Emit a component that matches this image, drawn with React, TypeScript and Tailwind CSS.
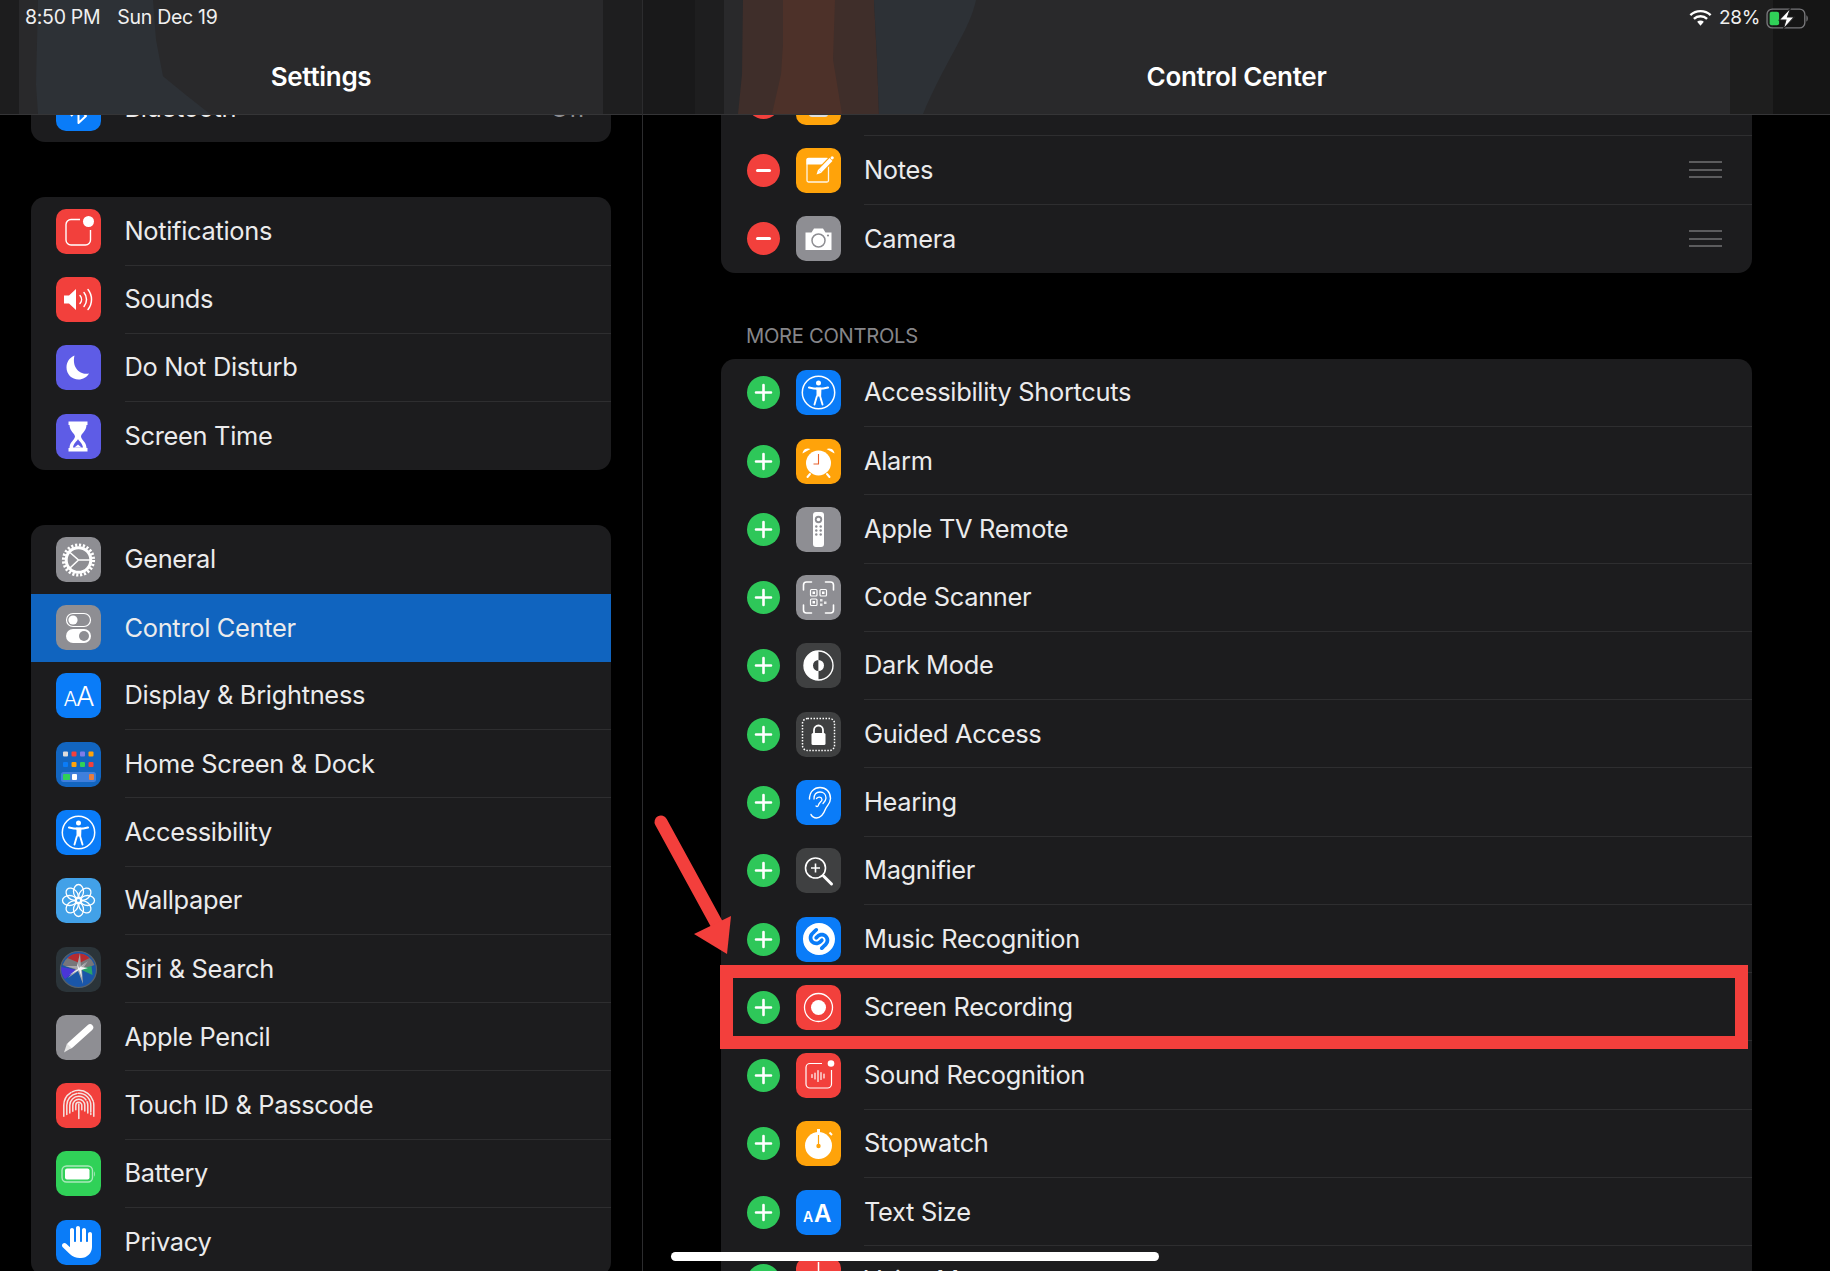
import React from "react";
import { SiShazam } from "react-icons/si";
import { FaHand } from "react-icons/fa6";

const V = ({ children }: { children: React.ReactNode }) => (
  <svg viewBox="0 0 45 45" className="size-full" fill="none">{children}</svg>
);

const Tile = ({ bg, children }: { bg: string; children: React.ReactNode }) => (
  <div className={`size-[45px] shrink-0 overflow-hidden rounded-[10px] ${bg}`}>{children}</div>
);

const W = "#ffffff";

const Bluetooth = () => (
  <Tile bg="bg-[#0a7cf8]"><V><path d="M15 15l15 15-7.5 7V8l7.500 7-15 15" stroke={W} strokeWidth="2" strokeLinejoin="round" /></V></Tile>
);
const Notifications = () => (
  <Tile bg="bg-[#f2403c]"><V>
    <path d="M24 10.500H15a5 5 0 0 0-5 5V31a5 5 0 0 0 5 5h14.500a5 5 0 0 0 5-5V21" stroke={W} strokeWidth="1.400" />
    <circle cx="32.500" cy="12.500" r="5.500" fill={W} />
  </V></Tile>
);
const Sounds = () => (
  <Tile bg="bg-[#f2403c]"><V>
    <path d="M8 18.500h5l7-6.500v21l-7-6.500H8z" fill={W} />
    <path d="M24 18.500a6 6 0 0 1 0 8M28 15.500a11 11 0 0 1 0 14M32 12.500a16 16 0 0 1 0 20" stroke={W} strokeWidth="1.500" strokeLinecap="round" />
  </V></Tile>
);
const Moon = () => (
  <Tile bg="bg-[#5e5ce6]"><V>
    <path d="M18.500 10.500C13 13 10.500 17.500 10.500 22.500c0 7 5.500 12 12 12 4.500 0 8.500-2.500 10.500-6-8.500 2-17.500-5.500-14.500-18z" fill={W} />
  </V></Tile>
);
const Hourglass = () => (
  <Tile bg="bg-[#5e5ce6]"><V>
    <path d="M12.500 7.500h19v3.500h-1c0 6-5.500 8.500-5.500 11.500s5.500 5.500 5.500 11.500h1V37.500h-19V34h1c0-6 5.500-8.500 5.500-11.500S13.500 17 13.500 11h-1z" fill={W} />
    <path d="M22 25c1 2.500 4.500 4 5 8.500H17c.5-4.500 4-6 5-8.500z" fill="#5e5ce6" />
    <path d="M18.500 33.500h7l-3.500-3z" fill={W} />
  </V></Tile>
);
const Gear = () => (
  <Tile bg="bg-[#8e8e93]"><V>
    <circle cx="22.500" cy="23" r="15" stroke={W} strokeWidth="3.200" strokeDasharray="2.200 1.727" />
    <circle cx="22.500" cy="23" r="12.300" stroke={W} strokeWidth="3" />
    <path d="M22.500 23L14 15.500M22.500 23H34M22.500 23L14 31" stroke={W} strokeWidth="1.600" />
  </V></Tile>
);
const Toggles = () => (
  <Tile bg="bg-[#8e8e93]"><V>
    <rect x="10.500" y="8.500" width="24" height="13" rx="6.500" stroke={W} strokeWidth="1.200" />
    <circle cx="17" cy="15" r="4.600" fill={W} />
    <rect x="10" y="24" width="25" height="14" rx="7" fill={W} />
    <circle cx="28" cy="31" r="5" fill="#8e8e93" />
  </V></Tile>
);
const AAThin = () => (
  <Tile bg="bg-[#0a7cf8]"><V>
    <text x="7.500" y="32.700" fontFamily="Inter, sans-serif" fontWeight="300" fontSize="20.500" fill={W}>A</text>
    <text x="20" y="32.700" fontFamily="Inter, sans-serif" fontWeight="300" fontSize="27.500" fill={W}>A</text>
  </V></Tile>
);
const Dock = () => {
  const r1 = ["#dcdcdc", "#f2403c", "#7d7ce8", "#ffa30a"];
  const r2 = ["#0a7cf8", "#ffa30a", "#30d158", "#f2403c"];
  return (
    <Tile bg="bg-[#1265c0]"><V>
      {r1.map((c, i) => <rect key={i} x={7 + i * 8.500} y="9.500" width="5" height="5" rx="1" fill={c} />)}
      {r2.map((c, i) => <rect key={i} x={7 + i * 8.500} y="20" width="5" height="5" rx="1" fill={c} />)}
      <rect x="5" y="30" width="35" height="10" rx="2.500" fill="#3f7fdc" />
      <rect x="7" y="32" width="7" height="6" rx="1" fill="#30d158" />
      <rect x="16" y="32" width="5" height="6" rx="1" fill="#ffffff" />
      <rect x="33" y="32" width="5" height="6" rx="1" fill="#e87d3e" />
    </V></Tile>
  );
};
const Access = () => (
  <Tile bg="bg-[#0a7cf8]"><V>
    <circle cx="22.500" cy="22.500" r="16.200" stroke={W} strokeWidth="1.500" />
    <circle cx="22.500" cy="13" r="2.500" fill={W} />
    <path d="M13 17.500c6 1.600 13 1.600 19 0" stroke={W} strokeWidth="2.200" strokeLinecap="round" />
    <path d="M20.500 18.500h4l-.3 8 2.300 8M20.800 26.500l-2.300 8" stroke={W} strokeWidth="1.900" strokeLinecap="round" strokeLinejoin="round" />
    <path d="M20.500 18.500h4v8h-4z" fill={W} />
  </V></Tile>
);
const Flower = () => (
  <Tile bg="bg-[#42a1e8]"><V>
    {[0, 45, 90, 135, 180, 225, 270, 315].map((a) => (
      <ellipse key={a} cx="22.500" cy="13.500" rx="5" ry="7" stroke={W} strokeWidth="1.300" transform={`rotate(${a} 22.500 22.500)`} />
    ))}
    <circle cx="22.500" cy="22.500" r="3" stroke={W} strokeWidth="1.300" />
  </V></Tile>
);
const Siri = () => (
  <Tile bg="bg-[#2b3439]"><V>
    <circle cx="22.500" cy="22.500" r="18" fill="#1a56a8" />
    <path d="M6.500 18a17 17 0 0 1 32 0l-16 6z" fill="#77767a" />
    <path d="M11.500 11a16 16 0 0 1 22 0l-10 5z" fill="#b52b30" />
    <path d="M5 20l16 3-12 9a18 18 0 0 1-4-12z" fill="#4a35d8" />
    <path d="M36.500 28l-13-6 12-3z" fill="#2aa36a" />
    <path d="M24 6l1 14 7-6-6 9 1 14-5-13-10 7 8-9-11-3 12 0z" fill="#a8a8ab" />
    <path d="M30 15l-7 6-2-5 1 6-9 6 10-5 3 8-1-8 7-2-7-1z" fill="#f4f6f8" />
    <circle cx="22.500" cy="22.500" r="18" stroke="#566069" strokeWidth="1.200" />
  </V></Tile>
);
const Pencil = () => (
  <Tile bg="bg-[#8e8e93]"><V>
    <path d="M34 12.500L14.500 30" stroke={W} strokeWidth="6.500" strokeLinecap="round" />
    <path d="M11 28.500l4.500 4.500-7.500 4.500z" fill="#e6e6e6" />
  </V></Tile>
);
const Finger = () => (
  <Tile bg="bg-[#f2403c]"><V>
    {[3, 6, 9, 12, 15].map((r) => (
      <path key={r} d={`M${22.800 - r} ${25 + r * 0.55}V22.300a${r} ${r} 0 0 1 ${r * 2} 0V${25 + r * 0.55}`} stroke="#f4e4e2" strokeWidth="1.500" strokeLinecap="round" strokeDasharray={r > 9 ? "26 1.500" : "30 2"} />
    ))}
    <path d="M22.800 21v14.500" stroke="#f4e4e2" strokeWidth="1.500" strokeLinecap="round" />
  </V></Tile>
);
const BatteryIcon = () => (
  <Tile bg="bg-[#30d158]"><V>
    <rect x="6" y="15" width="30.500" height="16" rx="4.500" stroke="#a9e9bb" strokeWidth="1.400" />
    <rect x="9" y="17.500" width="24.500" height="11" rx="2" fill={W} />
    <path d="M38 20.500c1.200.5 1.200 4.500 0 5z" fill="#a9e9bb" />
  </V></Tile>
);
const Hand = () => (
  <Tile bg="bg-[#0a7cf8]"><div className="flex size-full items-center justify-center text-[32px] text-white"><FaHand /></div></Tile>
);
const Notes = () => (
  <Tile bg="bg-[#ffa30a]"><V>
    <rect x="11" y="10.500" width="21.500" height="23.500" rx="1.500" stroke="#fff6e6" strokeWidth="1.300" />
    <path d="M10.500 11.500a1.500 1.500 0 0 1 1.500-1.500h20.500v6.500h-22z" fill={W} />
    <path d="M37 9.500l-16.500 17" stroke="#ffa30a" strokeWidth="6.500" />
    <path d="M35 11.500L24 23" stroke={W} strokeWidth="4" />
    <path d="M22.200 21.300l3.500 3.500-5.200 1.700z" fill={W} />
    <circle cx="36.200" cy="9.800" r="1.600" fill={W} />
  </V></Tile>
);
const Camera = () => (
  <Tile bg="bg-[#8e8e93]"><V>
    <path d="M9.500 16.500h6l2.500-4h9l2.500 4h6v17.500h-26z" fill={W} />
    <circle cx="22.500" cy="24.500" r="6.500" stroke="#8e8e93" strokeWidth="1.500" />
    <circle cx="32" cy="19.500" r="1.100" fill="#8e8e93" />
  </V></Tile>
);
const Calculator = () => (
  <Tile bg="bg-[#ffa30a]"><V><rect x="13" y="8" width="19" height="29" rx="3" fill="#ddd" /></V></Tile>
);
const Alarm = () => (
  <Tile bg="bg-[#ffa30a]"><V>
    <circle cx="22.500" cy="24" r="12.500" fill={W} />
    <path d="M6.500 14.500a5.500 5.500 0 0 1 8-4.500zM38.500 14.500a5.500 5.500 0 0 0-8-4.500z" fill={W} />
    <path d="M14 35l-2.500 3M31 35l2.500 3" stroke={W} strokeWidth="2" strokeLinecap="round" />
    <path d="M22.500 15v10h-5" stroke="#e8622c" strokeWidth="1.100" />
  </V></Tile>
);
const Remote = () => (
  <Tile bg="bg-[#8e8e93]"><V>
    <rect x="17" y="5" width="11" height="35" rx="3" fill={W} />
    <circle cx="22.500" cy="12.500" r="3.700" fill="#8e8e93" />
    <circle cx="22.500" cy="12.500" r="1.800" fill={W} />
    {[19.500, 23.500, 27.500].map((y) => (
      <React.Fragment key={y}>
        <circle cx="20.300" cy={y} r="1.200" fill="#8e8e93" />
        <circle cx="24.700" cy={y} r="1.200" fill="#8e8e93" />
      </React.Fragment>
    ))}
  </V></Tile>
);
const QR = () => (
  <Tile bg="bg-[#8e8e93]"><V>
    <path d="M7.500 15v-5a3 3 0 0 1 3-3h5M29.500 7h5a3 3 0 0 1 3 3v5M37.500 30v5a3 3 0 0 1-3 3h-5M15.500 38h-5a3 3 0 0 1-3-3v-5" stroke={W} strokeWidth="1.600" strokeLinecap="round" />
    <rect x="14.500" y="14.500" width="6.500" height="6.500" rx="1" stroke={W} strokeWidth="1.200" />
    <rect x="24" y="14.500" width="6.500" height="6.500" rx="1" stroke={W} strokeWidth="1.200" />
    <rect x="14.500" y="24" width="6.500" height="6.500" rx="1" stroke={W} strokeWidth="1.200" />
    <path d="M24 24h2.500v2.500H24zM28 26.500h2.500V29H28zM24 28.500h2.500V31H24z" fill={W} opacity=".8" />
    <path d="M16.500 16.500h2.500V19h-2.500zM26 16.500h2.500V19H26zM16.500 26h2.500v2.500h-2.500z" fill={W} />
  </V></Tile>
);
const Dark = () => (
  <Tile bg="bg-[#3f4041]"><V>
    <circle cx="22.500" cy="22.500" r="14.500" stroke={W} strokeWidth="1.400" />
    <path d="M22.500 8a14.500 14.500 0 0 0 0 29z" fill={W} />
    <path d="M22.500 17a5.500 5.500 0 0 0 0 11z" fill="#3f4041" />
    <path d="M22.500 17a5.500 5.500 0 0 1 0 11z" fill={W} />
  </V></Tile>
);
const Guided = () => (
  <Tile bg="bg-[#3f4041]"><V>
    <rect x="6.500" y="6.500" width="32" height="32" rx="5" stroke={W} strokeWidth="1.500" strokeDasharray="1.500 1.500" />
    <rect x="15.500" y="21" width="14" height="12" rx="1.500" fill={W} />
    <path d="M18 21.500v-3.500a4.500 4.500 0 0 1 9 0v3.500" stroke={W} strokeWidth="1.800" />
  </V></Tile>
);
const Ear = () => (
  <Tile bg="bg-[#0a7cf8]"><V>
    <path d="M13.500 19c0-7 4.500-11.500 10.500-11.500S34.500 12 34.500 18.500c0 5-3.500 7-5 10.500-1.500 4-3.500 9-9 9-2.500 0-5-2-5.500-3.500" stroke={W} strokeWidth="1.400" strokeLinecap="round" />
    <path d="M18 19c0-4.500 2.500-7 6-7s6 2.500 6 6c0 2.500-1.500 4-3 5.500M20.500 18.500c1.500-2 5-2 5.500 1 0 2-3 3-3.500 5.500-.2 1.500-1.500 2-2.500 1" stroke={W} strokeWidth="1.300" strokeLinecap="round" />
  </V></Tile>
);
const Magnifier = () => (
  <Tile bg="bg-[#3f4041]"><V>
    <circle cx="19.500" cy="20" r="10" stroke={W} strokeWidth="1.600" />
    <path d="M15 20h9M19.500 15.500v9" stroke={W} strokeWidth="1.600" />
    <path d="M27.500 28l8 8" stroke={W} strokeWidth="3" strokeLinecap="round" />
  </V></Tile>
);
const Shazam = () => (
  <Tile bg="bg-[#0a7cf8]"><div className="flex size-full items-center justify-center text-[32px] text-white"><SiShazam /></div></Tile>
);
const Record = () => (
  <Tile bg="bg-[#f2403c]"><V>
    <circle cx="22.500" cy="22.500" r="14" stroke={W} strokeWidth="1.300" />
    <circle cx="22.500" cy="22.500" r="7.500" fill={W} />
  </V></Tile>
);
const SoundRec = () => (
  <Tile bg="bg-[#f2403c]"><V>
    <path d="M26 10.500H14a4 4 0 0 0-4 4V31a4 4 0 0 0 4 4h17.500a4 4 0 0 0 4-4V17" stroke={W} strokeWidth="1.200" />
    <circle cx="35" cy="10.500" r="3.300" fill={W} />
    <path d="M16 21.500v3M19 20v6M22 17.500v11M25 19.500v7M28 21v4" stroke={W} strokeWidth="1.200" strokeLinecap="round" />
  </V></Tile>
);
const Stopwatch = () => (
  <Tile bg="bg-[#ffa30a]"><V>
    <circle cx="22.500" cy="24.500" r="13.500" fill={W} />
    <rect x="21" y="8" width="3" height="4" fill={W} />
    <path d="M33.500 11.500l2.500 2.500" stroke={W} strokeWidth="2" />
    <path d="M22.500 14v11" stroke="#ffa30a" strokeWidth="1.200" />
    <circle cx="22.500" cy="25" r="2.200" fill="#ffa30a" />
  </V></Tile>
);
const TextSize = () => (
  <Tile bg="bg-[#0a7cf8]"><V>
    <text x="7" y="32" fontFamily="Inter, sans-serif" fontWeight="600" fontSize="14" fill={W}>A</text>
    <text x="18" y="32" fontFamily="Inter, sans-serif" fontWeight="600" fontSize="24" fill={W}>A</text>
  </V></Tile>
);
const Voice = () => (
  <Tile bg="bg-[#f2403c]"><V>
    <path d="M22.500 4v12" stroke={W} strokeWidth="1.500" />
  </V></Tile>
);

const left1: [string, React.FC][] = [
  ["Notifications", Notifications], ["Sounds", Sounds], ["Do Not Disturb", Moon], ["Screen Time", Hourglass],
];
const left2: [string, React.FC][] = [
  ["General", Gear], ["Control Center", Toggles], ["Display & Brightness", AAThin], ["Home Screen & Dock", Dock],
  ["Accessibility", Access], ["Wallpaper", Flower], ["Siri & Search", Siri], ["Apple Pencil", Pencil],
  ["Touch ID & Passcode", Finger], ["Battery", BatteryIcon], ["Privacy", Hand],
];
const more: [string, React.FC][] = [
  ["Accessibility Shortcuts", Access], ["Alarm", Alarm], ["Apple TV Remote", Remote], ["Code Scanner", QR],
  ["Dark Mode", Dark], ["Guided Access", Guided], ["Hearing", Ear], ["Magnifier", Magnifier],
  ["Music Recognition", Shazam], ["Screen Recording", Record], ["Sound Recognition", SoundRec],
  ["Stopwatch", Stopwatch], ["Text Size", TextSize], ["Voice Memos", Voice],
];

const SideRow = ({ label, Icon, selected, hideSep, value }: { label: string; Icon: React.FC; selected?: boolean; hideSep?: boolean; value?: string }) => (
  <div className={`flex h-[68.27px] items-center pl-[24.5px] ${selected ? "bg-[#1064bf]" : ""}`}>
    <Icon />
    <div className={`ml-[24px] flex h-full flex-1 items-center justify-between pr-[25px] ${hideSep ? "" : "border-b border-[#2e2e30]"}`}>
      <span className="text-[25.4px] text-[#ebebec]">{label}</span>
      {value && <span className="text-[25.4px] text-[#8e8e93]">{value}</span>}
    </div>
  </div>
);

const Minus = () => (
  <div className="flex size-[33px] shrink-0 items-center justify-center rounded-full bg-[#f2403c]">
    <div className="h-[3px] w-[15px] rounded-full bg-white" />
  </div>
);
const Plus = () => (
  <div className="relative flex size-[33px] shrink-0 items-center justify-center rounded-full bg-[#2ec759]">
    <svg viewBox="0 0 33 33" className="size-full"><path d="M16.500 9v15M9 16.500h15" stroke="#fff" strokeWidth="2.600" strokeLinecap="round" /></svg>
  </div>
);
const Handle = () => (
  <div className="flex w-[33px] flex-col gap-[5.5px]">
    <div className="h-[2px] bg-[#5c5c5e]" /><div className="h-[2px] bg-[#5c5c5e]" /><div className="h-[2px] bg-[#5c5c5e]" />
  </div>
);

const CtlRow = ({ label, Icon, mark, handle, last }: { label: string; Icon: React.FC; mark: React.ReactNode; handle?: boolean; last?: boolean }) => (
  <div className="flex h-[68.27px] items-center pl-[26px]">
    {mark}
    <div className="ml-[16px]"><Icon /></div>
    <div className={`ml-[23px] flex h-full flex-1 items-center justify-between pr-[30px] ${last ? "" : "border-b border-[#2e2e30]"}`}>
      <span className="text-[25.4px] text-[#ebebec]">{label}</span>
      {handle && <Handle />}
    </div>
  </div>
);

const Wifi = () => (
  <svg viewBox="0 0 22 17" className="h-[18px] w-[23px]" fill="none">
    <path d="M1.300 5.800a14 14 0 0 1 19.400 0" stroke="#fff" strokeWidth="2.300" />
    <path d="M4.700 9.300a9.200 9.200 0 0 1 12.600 0" stroke="#fff" strokeWidth="2.300" />
    <path d="M7.800 12.200a4.600 4.600 0 0 1 6.400 0L11 15.800z" fill="#fff" />
  </svg>
);
const Batt = () => (
  <svg viewBox="0 0 41 20" className="h-[21px] w-[43px]" fill="none">
    <rect x="1" y="1" width="36" height="18" rx="5" stroke="#77777a" strokeWidth="1.300" />
    <path d="M38.500 7c1.800.6 1.800 5.400 0 6z" fill="#77777a" />
    <rect x="3.500" y="3.500" width="9" height="13" rx="2" fill="#30d158" />
    <path d="M23.500 0L12.500 11.500h6.500L16.500 20 27 8.500h-6.500z" fill="#fff" stroke="#222" strokeWidth="1" />
  </svg>
);

const Header = ({ title, backdrop, children }: { title: string; backdrop: React.ReactNode; children: React.ReactNode }) => (
  <div className="absolute inset-x-0 top-0 h-[115px] overflow-hidden border-b border-[#353537] bg-[#29292b]">
    {backdrop}
    <div className="relative flex h-[36px] items-center text-[19.5px] text-[#f0f0f0]">{children}</div>
    <div className="relative flex h-[81px] items-center justify-center text-[26px] font-semibold text-white">{title}</div>
  </div>
);

const LeftBack = () => (
  <svg viewBox="0 0 642 115" className="absolute inset-0 size-full" preserveAspectRatio="none">
    <rect x="0" width="19" height="115" fill="#1d1d1e" />
    <path d="M38 0h115l3 40 7 37 22 18 25 20H38l-2-30z" fill="#2d3136" />
    <rect x="603" width="39" height="115" fill="#1e1e1f" />
  </svg>
);
const RightBack = () => (
  <svg viewBox="0 0 1187 115" className="absolute inset-0 size-full" preserveAspectRatio="none">
    <rect x="0" width="52" height="115" fill="#19191a" />
    <rect x="52" width="29" height="115" fill="#1e1e1f" />
    <path d="M100 0h131l3 60 2 55H95l4-40z" fill="#3f2e2a" />
    <path d="M140 0h52l-2 60 9 55h-70l9-40 2-30z" fill="#4d3129" />
    <path d="M231 0h102c-6 30-30 60-53 115h-44l-2-55z" fill="#2d3136" />
    <rect x="1087" width="43" height="115" fill="#1e1e1e" />
    <rect x="1130" width="57" height="115" fill="#151515" />
  </svg>
);

export default function App() {
  return (
    <div className="relative flex h-[1271px] w-[1830px] overflow-hidden bg-black font-['Inter','Noto_Sans',sans-serif] tracking-[-0.3px]">
      <aside className="relative h-full w-[643px] shrink-0 overflow-hidden border-r border-[#2c2c2e]">
        <div className="flex flex-col gap-[55px] pl-[31px] pr-[31px] pt-[74px]">
          <div className="overflow-hidden rounded-[14px] bg-[#1c1c1e]">
            <SideRow label="Bluetooth" Icon={Bluetooth} value="Off" hideSep />
          </div>
          <div className="overflow-hidden rounded-[14px] bg-[#1c1c1e]">
            {left1.map(([l, I], i) => <SideRow key={l} label={l} Icon={I} hideSep={i === 3} />)}
          </div>
          <div className="overflow-hidden rounded-[14px] bg-[#1c1c1e]">
            {left2.map(([l, I], i) => <SideRow key={l} label={l} Icon={I} selected={i === 1} hideSep={i === 0 || i === 1 || i === 10} />)}
          </div>
        </div>
        <Header title="Settings" backdrop={<LeftBack />}>
          <span className="ml-[25px]">8:50 PM</span>
          <span className="ml-[17px]">Sun Dec 19</span>
        </Header>
      </aside>

      <main className="relative h-full flex-1 overflow-hidden">
        <div className="flex flex-col pl-[78px] pr-[78px] pt-[68px]">
          <div className="overflow-hidden rounded-[14px] bg-[#1c1c1e]">
            <CtlRow label="Calculator" Icon={Calculator} mark={<Minus />} handle />
            <CtlRow label="Notes" Icon={Notes} mark={<Minus />} handle />
            <CtlRow label="Camera" Icon={Camera} mark={<Minus />} handle last />
          </div>
          <div className="mb-[11px] ml-[25px] mt-[51px] flex h-[24px] items-center text-[20.2px] text-[#86868a]">MORE CONTROLS</div>
          <div className="rounded-[14px] bg-[#1c1c1e]">
            {more.map(([l, I]) => <CtlRow key={l} label={l} Icon={I} mark={<Plus />} />)}
          </div>
        </div>
        <Header title="Control Center" backdrop={<RightBack />}>
          <div className="ml-auto mr-[21px] flex items-center gap-[6px]">
            <Wifi />
            <span className="ml-[1px] text-[19px]">28%</span>
            <Batt />
          </div>
        </Header>
      </main>

      <div className="absolute left-[720px] top-[965px] h-[84px] w-[1028px] border-[13.5px] border-[#f33f3c]" />
      <svg className="absolute left-[650px] top-[810px] h-[160px] w-[90px]" viewBox="650 810 90 160" fill="none">
        <path d="M661 822L720 930" stroke="#f33f3c" strokeWidth="13" strokeLinecap="round" />
        <path d="M727 954L731 916L694 934z" fill="#f33f3c" />
      </svg>
      <div className="absolute left-[671px] top-[1252px] h-[9px] w-[488px] rounded-full bg-white" />
    </div>
  );
}
